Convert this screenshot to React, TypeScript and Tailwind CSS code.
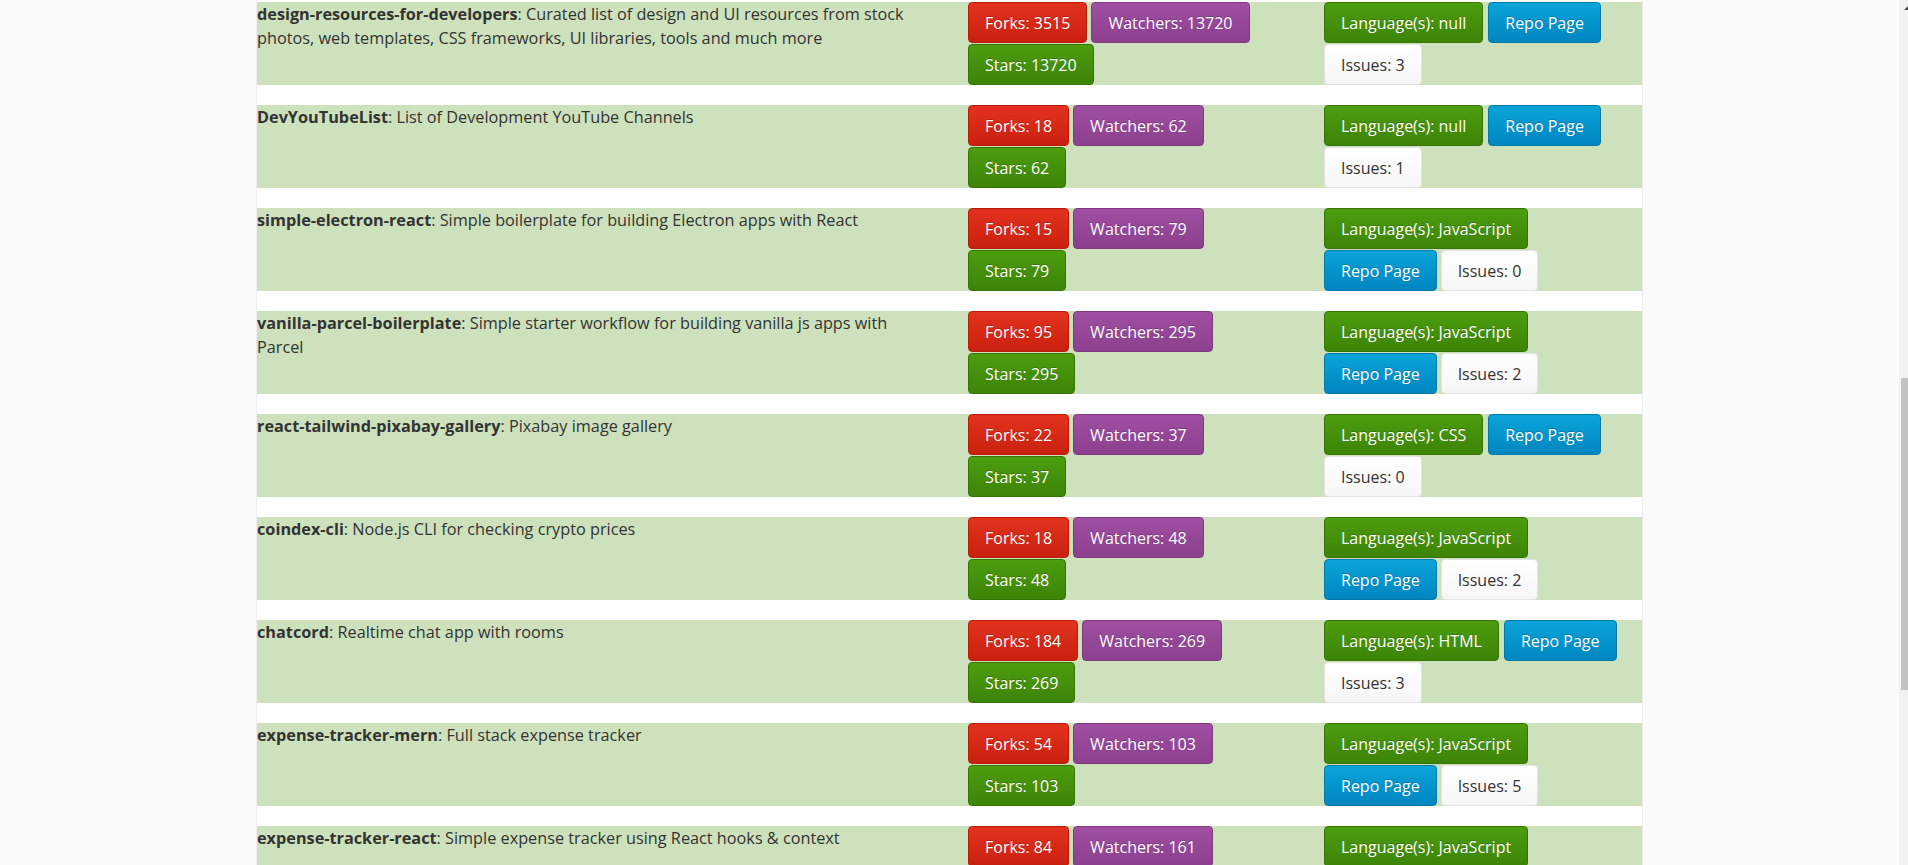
import React from "react";

type Repo = {
    name: string;
    description: string;
    forks: number;
    watchers: number;
    stars: number;
    language: string;
    issues: number;
};

const repos: Repo[] = [
    { name: "design-resources-for-developers", description: "Curated list of design and UI resources from stock photos, web templates, CSS frameworks, UI libraries, tools and much more", forks: 3515, watchers: 13720, stars: 13720, language: "null", issues: 3 },
    { name: "DevYouTubeList", description: "List of Development YouTube Channels", forks: 18, watchers: 62, stars: 62, language: "null", issues: 1 },
    { name: "simple-electron-react", description: "Simple boilerplate for building Electron apps with React", forks: 15, watchers: 79, stars: 79, language: "JavaScript", issues: 0 },
    { name: "vanilla-parcel-boilerplate", description: "Simple starter workflow for building vanilla js apps with Parcel", forks: 95, watchers: 295, stars: 295, language: "JavaScript", issues: 2 },
    { name: "react-tailwind-pixabay-gallery", description: "Pixabay image gallery", forks: 22, watchers: 37, stars: 37, language: "CSS", issues: 0 },
    { name: "coindex-cli", description: "Node.js CLI for checking crypto prices", forks: 18, watchers: 48, stars: 48, language: "JavaScript", issues: 2 },
    { name: "chatcord", description: "Realtime chat app with rooms", forks: 184, watchers: 269, stars: 269, language: "HTML", issues: 3 },
    { name: "expense-tracker-mern", description: "Full stack expense tracker", forks: 54, watchers: 103, stars: 103, language: "JavaScript", issues: 5 },
    { name: "expense-tracker-react", description: "Simple expense tracker using React hooks & context", forks: 84, watchers: 161, stars: 161, language: "JavaScript", issues: 1 },
];

const base =
    "inline-flex items-center h-[41px] px-[16px] rounded-[4px] border text-[16px] whitespace-nowrap";
const colored = "text-white [text-shadow:0_-1px_0_rgba(0,0,0,0.2)] bg-linear-to-b";

const Btn = ({ kind, children }: { kind: string; children: React.ReactNode }) => {
    const styles: Record<string, string> = {
        red: `${colored} from-[#e2321e] to-[#c9200e] border-[#b91c0b]`,
        purple: `${colored} from-[#a04fa2] to-[#8b408d] border-[#80387f]`,
        green: `${colored} from-[#4d9d0f] to-[#3d8407] border-[#367406]`,
        blue: `${colored} from-[#0ba4d9] to-[#0086c0] border-[#0079ad]`,
        white: "text-[#333] bg-linear-to-b from-[#ffffff] to-[#f6f6f6] border-[#e3e3e3]",
    };
    return <span className={`${base} ${styles[kind]}`}>{children}</span>;
};

const RepoRow = ({ repo }: { repo: Repo }) => {
    const long = repo.language === "JavaScript";
    return (
        <div className="flex h-[83px] shrink-0 bg-[#cde1bc]">
            {/* Name + description */}
            <div className="w-[711px] pr-[46px] text-[16.25px] leading-[24px] text-[#333]">
                <span className="font-bold">{repo.name}</span>: {repo.description}
            </div>

            {/* Counts */}
            <div className="flex w-[356px] flex-col gap-y-[1px]">
                <div className="flex gap-[4px]">
                    <Btn kind="red">Forks: {repo.forks}</Btn>
                    <Btn kind="purple">Watchers: {repo.watchers}</Btn>
                </div>
                <div className="flex">
                    <Btn kind="green">Stars: {repo.stars}</Btn>
                </div>
            </div>

            {/* Language, link, issues */}
            <div className="flex flex-1 flex-col gap-y-[1px]">
                {long ? (
                    <>
                        <div className="flex">
                            <Btn kind="green">Language(s): {repo.language}</Btn>
                        </div>
                        <div className="flex gap-[4px]">
                            <Btn kind="blue">Repo Page</Btn>
                            <Btn kind="white">Issues: {repo.issues}</Btn>
                        </div>
                    </>
                ) : (
                    <>
                        <div className="flex gap-[5px]">
                            <Btn kind="green">Language(s): {repo.language}</Btn>
                            <Btn kind="blue">Repo Page</Btn>
                        </div>
                        <div className="flex">
                            <Btn kind="white">Issues: {repo.issues}</Btn>
                        </div>
                    </>
                )}
            </div>
        </div>
    );
};

export default function App() {
    return (
        <div
            className="flex h-[865px] w-full overflow-hidden bg-[#fafafa]"
            style={{ fontFamily: '"Open Sans", "Noto Sans", sans-serif' }}
        >
            <div className="flex-1 overflow-hidden">
                <div className="ml-[256px] flex h-full w-[1387px] flex-col gap-[20px] border-x border-[#eeeeee] bg-white pt-[2px]">
                    {repos.map((r) => (
                        <RepoRow key={r.name} repo={r} />
                    ))}
                </div>
            </div>

            {/* scrollbar, cut at the window edge */}
            <div className="flex w-[9px] flex-col bg-[#f1f1f1]">
                <div className="ml-[5px] mt-[6px] h-0 w-0 border-x-[4px] border-b-[4px] border-x-transparent border-b-[#505050]" />
                <div className="ml-[2px] mt-[368px] h-[312px] w-[7px] bg-[#c1c1c1]" />
            </div>
        </div>
    );
}
